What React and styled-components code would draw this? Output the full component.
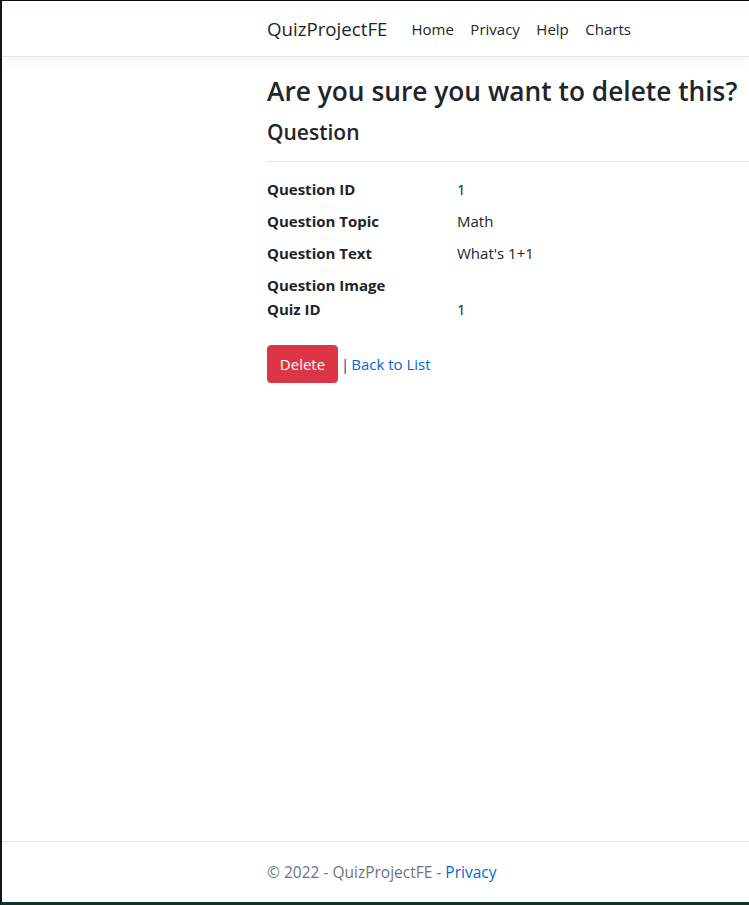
import React from "react";
import styled, { createGlobalStyle } from "styled-components";

const Global = createGlobalStyle`
  html, body { margin: 0; padding: 0; }
  body {
    font-family: "Open Sans", "Noto Sans", sans-serif;
    color: #212529;
    background: #fff;
  }
  * { box-sizing: border-box; }
`;

const Frame = styled.div`
  height: 905px;
  display: flex;
  flex-direction: column;
  border-top: 1px solid #0d0b1c;
  border-left: 2px solid #14121f;
  border-bottom: 3px solid #173029;
  overflow: hidden;
`;

const NavBar = styled.header`
  height: 56px;
  flex: none;
  border-bottom: 1px solid #e5e5e5;
  box-shadow: 0 4px 12px rgba(0, 0, 0, 0.05);
  display: flex;
  align-items: center;
  padding-left: 265px;
  position: relative;
  z-index: 1;
`;

const Brand = styled.a`
  font-size: 18.7px;
  color: #212529;
  text-decoration: none;
  margin-right: 24px;
`;

const NavList = styled.nav`
  display: flex;
  gap: 16.5px;
`;

const NavLink = styled.a`
  font-size: 15px;
  color: #212529;
  text-decoration: none;
`;

const Main = styled.main`
  flex: 1;
  padding-left: 265px;
  padding-top: 19px;
`;

const Title = styled.h1`
  margin: 0;
  font-size: 26.3px;
  font-weight: 600;
  line-height: 1.2;
  white-space: nowrap;
`;

const Sub = styled.h2`
  margin: 12px 0 0;
  font-size: 21px;
  font-weight: 600;
  line-height: 1.2;
`;

const Rule = styled.hr`
  margin: 16px 0 15px;
  border: 0;
  border-top: 1px solid #dee2e6;
`;

const DefList = styled.dl`
  display: grid;
  grid-template-columns: 190px 1fr;
  margin: 0;
  font-size: 15px;
  line-height: 24px;
`;

const Term = styled.dt`
  font-weight: 700;
  margin-bottom: ${(p) => (p.$tight ? "0" : "8px")};
`;

const Desc = styled.dd`
  margin: 0 0 ${(p) => (p.$tight ? "0" : "8px")};
`;

const Actions = styled.form`
  margin-top: 16px;
  display: flex;
  align-items: center;
  font-size: 15px;
`;

const DangerButton = styled.button`
  background: #dc3545;
  color: #fff;
  border: 1px solid #dc3545;
  border-radius: 4px;
  font-family: inherit;
  font-size: 15px;
  height: 38px;
  width: 71px;
  padding: 0;
  margin-right: 3px;
`;

const Sep = styled.span`
  color: #3a2b6b;
  margin-right: 2px;
`;

const Link = styled.a`
  color: #0366d6;
  text-decoration: none;
`;

const Footer = styled.footer`
  flex: none;
  height: 61px;
  border-top: 1px solid #dee2e6;
  padding-left: 265px;
  display: flex;
  align-items: center;
  color: #6c757d;
  font-size: 15.5px;
`;

const rows = [
  ["Question ID", "1"],
  ["Question Topic", "Math"],
  ["Question Text", "What's 1+1"],
  ["Question Image", "", true],
  ["Quiz ID", "1"],
];

export default function App() {
  return (
    <>
      <Global />
      <Frame>
        <NavBar>
          <Brand>QuizProjectFE</Brand>
          <NavList>
            <NavLink>Home</NavLink>
            <NavLink>Privacy</NavLink>
            <NavLink>Help</NavLink>
            <NavLink>Charts</NavLink>
          </NavList>
        </NavBar>
        <Main>
          <Title>Are you sure you want to delete this?</Title>
          <Sub>Question</Sub>
          <Rule />
          <DefList>
            {rows.map(([k, v, tight]) => (
              <React.Fragment key={k}>
                <Term $tight={tight}>{k}</Term>
                <Desc $tight={tight}>{v}</Desc>
              </React.Fragment>
            ))}
          </DefList>
          <Actions onSubmit={(e) => e.preventDefault()}>
            <DangerButton type="submit">Delete</DangerButton>
            <Sep>|</Sep>
            <Link>Back to List</Link>
          </Actions>
        </Main>
        <Footer>
          © 2022 - QuizProjectFE -&nbsp;<Link>Privacy</Link>
        </Footer>
      </Frame>
    </>
  );
}
